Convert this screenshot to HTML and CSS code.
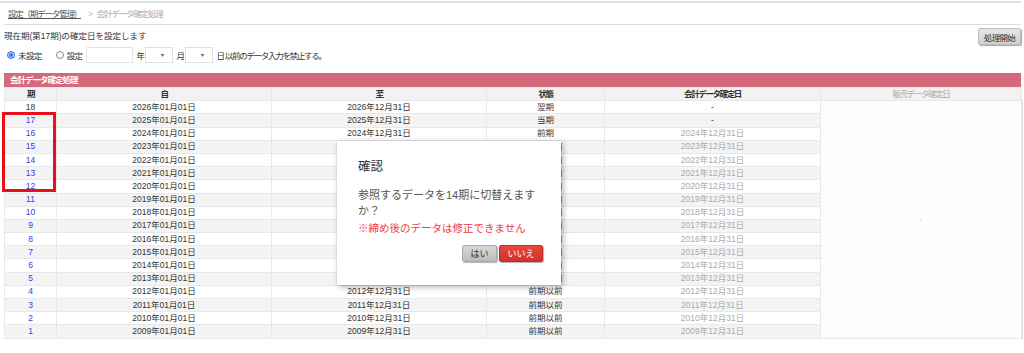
FILE: index.html
```html
<!DOCTYPE html>
<html lang="ja">
<head>
<meta charset="utf-8">
<link rel="stylesheet" href="styles.css">
</head>
<body>
<div class="page">
  <div class="crumb"><a class="crumb-link">設定（期データ管理）</a><span class="crumb-sep">&gt;</span><span class="crumb-cur">会計データ確定処理</span></div>
  <div class="settings">
    <div class="settings-main">
      <p class="desc">現在期(第17期)の確定日を設定します</p>
      <div class="opts">
        <label class="radio"><span class="dot on"></span>未設定</label>
        <label class="radio"><span class="dot"></span>設定</label>
        <span class="input"></span>
        <span class="unit">年</span>
        <span class="select"><span class="arrow">▾</span></span>
        <span class="unit">月</span>
        <span class="select"><span class="arrow">▾</span></span>
        <span class="unit tight">日 以前のデータ入力を禁止する。</span>
      </div>
    </div>
    <button class="start">処理開始</button>
  </div>
  <div class="panel">
    <div class="panel-title">会計データ確定処理</div>
    <table class="grid">
      <colgroup>
        <col class="c1"><col class="c2"><col class="c3"><col class="c4"><col class="c5"><col class="c6">
      </colgroup>
      <thead>
        <tr><th>期</th><th>自</th><th>至</th><th>状態</th><th>会計データ確定日</th><th class="muted">販売データ確定日</th></tr>
      </thead>
      <tbody>
        <tr><td>18</td><td>2026年01月01日</td><td>2026年12月31日</td><td>翌期</td><td>-</td><td class="side" rowspan="18">-</td></tr>
        <tr><td class="lnk">17</td><td>2025年01月01日</td><td>2025年12月31日</td><td>当期</td><td>-</td></tr>
        <tr><td class="lnk">16</td><td>2024年01月01日</td><td>2024年12月31日</td><td>前期</td><td class="gray">2024年12月31日</td></tr>
        <tr><td class="lnk">15</td><td>2023年01月01日</td><td>2023年12月31日</td><td>前期以前</td><td class="gray">2023年12月31日</td></tr>
        <tr><td class="lnk">14</td><td>2022年01月01日</td><td>2022年12月31日</td><td>前期以前</td><td class="gray">2022年12月31日</td></tr>
        <tr><td class="lnk">13</td><td>2021年01月01日</td><td>2021年12月31日</td><td>前期以前</td><td class="gray">2021年12月31日</td></tr>
        <tr><td class="lnk">12</td><td>2020年01月01日</td><td>2020年12月31日</td><td>前期以前</td><td class="gray">2020年12月31日</td></tr>
        <tr><td class="lnk">11</td><td>2019年01月01日</td><td>2019年12月31日</td><td>前期以前</td><td class="gray">2019年12月31日</td></tr>
        <tr><td class="lnk">10</td><td>2018年01月01日</td><td>2018年12月31日</td><td>前期以前</td><td class="gray">2018年12月31日</td></tr>
        <tr><td class="lnk">9</td><td>2017年01月01日</td><td>2017年12月31日</td><td>前期以前</td><td class="gray">2017年12月31日</td></tr>
        <tr><td class="lnk">8</td><td>2016年01月01日</td><td>2016年12月31日</td><td>前期以前</td><td class="gray">2016年12月31日</td></tr>
        <tr><td class="lnk">7</td><td>2015年01月01日</td><td>2015年12月31日</td><td>前期以前</td><td class="gray">2015年12月31日</td></tr>
        <tr><td class="lnk">6</td><td>2014年01月01日</td><td>2014年12月31日</td><td>前期以前</td><td class="gray">2014年12月31日</td></tr>
        <tr><td class="lnk">5</td><td>2013年01月01日</td><td>2013年12月31日</td><td>前期以前</td><td class="gray">2013年12月31日</td></tr>
        <tr><td class="lnk">4</td><td>2012年01月01日</td><td>2012年12月31日</td><td>前期以前</td><td class="gray">2012年12月31日</td></tr>
        <tr><td class="lnk">3</td><td>2011年01月01日</td><td>2011年12月31日</td><td>前期以前</td><td class="gray">2011年12月31日</td></tr>
        <tr><td class="lnk">2</td><td>2010年01月01日</td><td>2010年12月31日</td><td>前期以前</td><td class="gray">2010年12月31日</td></tr>
        <tr><td class="lnk">1</td><td>2009年01月01日</td><td>2009年12月31日</td><td>前期以前</td><td class="gray">2009年12月31日</td></tr>
      </tbody>
    </table>
  </div>
  <div class="redbox"></div>
  <div class="dialog">
    <div class="dlg-title">確認</div>
    <div class="dlg-msg">参照するデータを14期に切替えますか？</div>
    <div class="dlg-warn">※締め後のデータは修正できません</div>
    <div class="dlg-btns"><button class="btn-yes">はい</button><button class="btn-no">いいえ</button></div>
  </div>
</div>
</body>
</html>
```

FILE: styles.css
```css
* { box-sizing: border-box; }
html, body { margin: 0; padding: 0; background: #fff; }
body {
  font-family: "Liberation Sans", "Noto Sans CJK JP", sans-serif;
  color: #333;
  font-size: 8.5px;
  width: 1024px;
  height: 353px;
  overflow: hidden;
}
.page {
  position: relative;
  border-top: 2px solid #e2e2e2;
  margin-top: 1px;
  width: 1021px;
  padding: 0 0 0 4px;
}
.crumb {
  height: 22px;
  padding: 6px 0 0 4px;
  border-bottom: 1px solid #dcdcdc;
  line-height: 10px;
  white-space: nowrap;
  letter-spacing: -1.2px;
}
.crumb-link { color: #555; text-decoration: underline; }
.crumb-sep { color: #bbb; margin: 0 5px 0 7px; }
.crumb-cur { color: #aaa; }
.settings {
  display: flex;
  justify-content: space-between;
  align-items: flex-start;
  padding-top: 3px;
  height: 48px;
}
.desc { margin: 3px 0 0 0; line-height: 10px; }
.opts {
  display: flex;
  align-items: center;
  margin-top: 6px;
  height: 16px;
  white-space: nowrap;
}
.radio { display: flex; align-items: center; letter-spacing: -0.6px; }
.radio + .radio { margin-left: 11px; }
.dot {
  width: 8px; height: 8px; border-radius: 50%;
  border: 1px solid #888; margin: 0 3px 0 3px; background: #fff;
}
.dot.on { border-color: #3b7de0; background: #3b7de0; box-shadow: inset 0 0 0 1px #cfe0fa; }
.input {
  width: 47px; height: 16px; border: 1px solid #e4e4e4; margin-left: 3px; background: #fff;
}
.unit { margin: 0 0 0 4px; width: 8px; }
.tight { letter-spacing: -1.3px; margin-left: 4px; width: auto; }
.select {
  width: 28px; height: 16px; border: 1px solid #e0e0e0;
  display: flex; align-items: center; justify-content: flex-end; padding-right: 8px;
}
.select + .unit { margin-left: 4px; }
.arrow { font-size: 6px; color: #555; line-height: 1; }
.start {
  margin: 0;
  width: 43px; height: 17px;
  font: inherit; font-size: 8.5px; color: #333; letter-spacing: -0.8px;
  background: linear-gradient(#e6e6e6, #cfcfcf);
  border: 1px solid #bdbdbd;
  border-radius: 2px;
  box-shadow: 1px 1px 1px rgba(0,0,0,0.35);
  padding: 0;
}
.panel { width: 1017px; }
.panel-title {
  background: #d46a79;
  color: #fff;
  font-weight: bold;
  height: 14px;
  line-height: 14px;
  padding-left: 6px;
  letter-spacing: -1px;
}
.grid {
  width: 1017px;
  border-collapse: collapse;
  table-layout: fixed;
}
.c1 { width: 52px; } .c2 { width: 215px; } .c3 { width: 215px; }
.c4 { width: 118px; } .c5 { width: 216px; } .c6 { width: 201px; }
.grid th, .grid td {
  border: 1px solid #e8e8e8;
  height: 13.2px;
  padding: 0;
  text-align: center;
  line-height: 11px;
  font-size: 8.5px;
  white-space: nowrap;
}
.grid thead th { background: #f2f2f2; font-weight: bold; letter-spacing: -1.4px; }
.grid thead th.muted { font-weight: normal; color: #aaa; }
.grid tbody tr:nth-child(even) td { background: #f4f4f4; }
.grid tbody td.side { background: #fdfdfd !important; color: #ccc; border-right: 2px solid #e4e4e4; }
.lnk { color: #3a3ae6; }
.gray { color: #aaa; }
.redbox {
  position: absolute;
  left: 2px; top: 109px;
  width: 54px; height: 80px;
  border: 3px solid #e8101a;
}
.dialog {
  position: absolute;
  left: 337px; top: 138px;
  width: 224px; height: 144px;
  background: #fff;
  box-shadow: 2px 2px 6px rgba(0,0,0,0.3), 0 0 2px rgba(0,0,0,0.15);
  padding: 18px 18px 0 21px;
}
.dlg-title { font-size: 12.5px; color: #333; line-height: 16px; }
.dlg-msg { font-size: 11px; color: #555; line-height: 15.5px; margin-top: 13px; width: 183px; }
.dlg-warn { font-size: 10.5px; color: #f23b3b; line-height: 15px; margin-top: 2px; white-space: nowrap; }
.dlg-btns { display: flex; justify-content: flex-end; gap: 2px; margin-top: 9px; }
.dlg-btns button {
  font: inherit; font-size: 9px; height: 17px; padding: 0; border-radius: 2px;
  box-shadow: 1px 1px 1px rgba(0,0,0,0.3);
}
.btn-yes { width: 35px; background: linear-gradient(#d8d8d8, #bcbcbc); border: 1px solid #aaa; color: #333; }
.btn-no { width: 44px; background: linear-gradient(#e8483a, #d33328); border: 1px solid #c02a20; color: #fff; }
```
